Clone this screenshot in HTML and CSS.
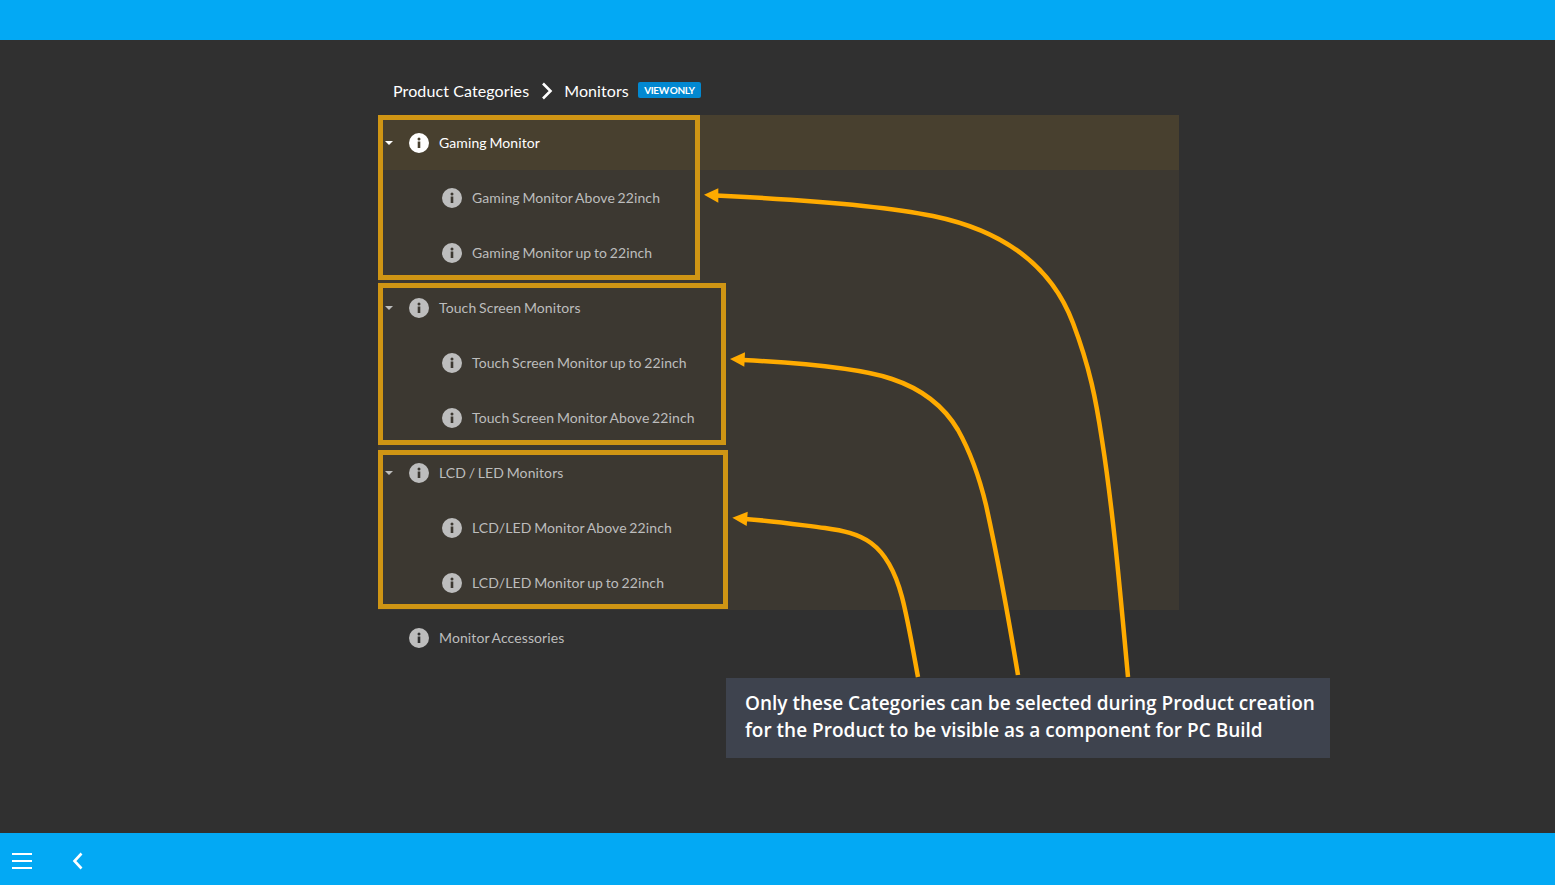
FILE: index.html
```html
<!DOCTYPE html>
<html lang="en">
<head>
  <meta charset="utf-8">
  <meta name="viewport" content="width=device-width, initial-scale=1">
  <title>Product Categories</title>
  <link rel="stylesheet" href="styles.css">
</head>
<body>
  <div class="topbar"></div>

  <div class="main">
    <div class="panel">
      <div class="breadcrumb">
        <span>Product Categories</span>
        <svg class="crumb-sep" width="14" height="18" viewBox="0 0 14 18"><path d="M3 1.5 L10.5 9 L3 16.5" fill="none" stroke="#fff" stroke-width="2.6"/></svg>
        <span>Monitors</span>
        <span class="badge">VIEW ONLY</span>
      </div>

      <div class="tree">
        <div class="tree-group">
          <div class="row row-parent row-active">
            <span class="caret"></span>
            <svg class="info"><use href="#info-icon"/></svg>
            <span>Gaming Monitor</span>
          </div>
          <div class="row row-child"><svg class="info"><use href="#info-icon"/></svg><span>Gaming Monitor Above 22inch</span></div>
          <div class="row row-child"><svg class="info"><use href="#info-icon"/></svg><span>Gaming Monitor up to 22inch</span></div>
          <div class="row row-parent"><span class="caret"></span><svg class="info"><use href="#info-icon"/></svg><span>Touch Screen Monitors</span></div>
          <div class="row row-child"><svg class="info"><use href="#info-icon"/></svg><span>Touch Screen Monitor up to 22inch</span></div>
          <div class="row row-child"><svg class="info"><use href="#info-icon"/></svg><span>Touch Screen Monitor Above 22inch</span></div>
          <div class="row row-parent"><span class="caret"></span><svg class="info"><use href="#info-icon"/></svg><span>LCD / LED Monitors</span></div>
          <div class="row row-child"><svg class="info"><use href="#info-icon"/></svg><span>LCD/LED Monitor Above 22inch</span></div>
          <div class="row row-child"><svg class="info"><use href="#info-icon"/></svg><span>LCD/LED Monitor up to 22inch</span></div>
        </div>
        <div class="row row-parent"><span class="caret caret-none"></span><svg class="info"><use href="#info-icon"/></svg><span>Monitor Accessories</span></div>
      </div>

      <!-- annotations drawn on top of the screenshot -->
      <div class="mark mark-1"></div>
      <div class="mark mark-2"></div>
      <div class="mark mark-3"></div>
      <svg class="arrows" width="1000" height="640" viewBox="378 60 1000 640">
        <g fill="none" stroke="#ffab00" stroke-width="4.5">
          <path d="M716 195.5 C790 199 880 205 933 216 C1000 230 1050 262 1073 323 C1090 368 1096 400 1102 440 C1113 510 1120 590 1128 677"/>
          <path d="M743 360 C800 363 860 368 892 379 C925 390 945 408 958 430 C972 455 980 480 986 505 C997 555 1008 615 1018 675"/>
          <path d="M745 519 C775 521 800 525 825 528 C860 533 887 540 902 597 C908 620 913 650 918 677"/>
        </g>
        <g fill="#ffab00">
          <path d="M704 194.7 L718.3 188.3 L718.3 202.7 Z"/>
          <path d="M730 359 L745 352.3 L744.3 366.7 Z"/>
          <path d="M732.3 517.7 L747.7 511.7 L746.7 526 Z"/>
        </g>
      </svg>
      <div class="callout">Only these Categories can be selected during Product creation for the Product to be visible as a component for PC Build</div>
    </div>
  </div>

  <div class="bottombar">
    <svg class="menu-icon" width="20" height="16" viewBox="0 0 20 16"><path d="M0 1 H20 M0 8 H20 M0 15 H20" stroke="#fff" stroke-width="2"/></svg>
    <svg class="back-icon" width="12" height="18" viewBox="0 0 12 18"><path d="M9.5 1.5 L2.5 9 L9.5 16.5" fill="none" stroke="#fff" stroke-width="2.6"/></svg>
  </div>

  <svg class="icon-defs" width="0" height="0">
    <symbol id="info-icon" viewBox="0 0 20 20">
      <path fill-rule="evenodd" d="M10 0 A10 10 0 1 1 10 20 A10 10 0 1 1 10 0 Z M8.7 8.5 V15 H11.3 V8.5 Z M10 4.6 A1.5 1.5 0 1 0 10 7.6 A1.5 1.5 0 1 0 10 4.6 Z"/>
    </symbol>
  </svg>
</body>
</html>
```

FILE: styles.css
```css
* {
  box-sizing: border-box;
}

html, body {
  height: 100%;
}

body {
  margin: 0;
  display: flex;
  flex-direction: column;
  overflow: hidden;
  background: #303030;
  font-family: Lato, sans-serif;
  color: #fff;
}

.topbar {
  height: 40px;
  flex-shrink: 0;
  background: #03a9f4;
}

.main {
  flex: 1;
  background: #303030;
  padding-top: 30px;
}

.panel {
  position: relative;
  width: 801px;
  margin-left: 378px;
}

.breadcrumb {
  height: 45px;
  padding: 0 0 4px 15px;
  display: flex;
  align-items: center;
  font-size: 16px;
  letter-spacing: 0.1px;
  color: #fff;
}

.crumb-sep {
  margin: 0 10px 0 11px;
}

.badge {
  margin-left: 9px;
  width: 63px;
  height: 16px;
  line-height: 16px;
  text-align: center;
  border-radius: 2px;
  background: #0288d1;
  font-size: 10px;
  font-weight: 700;
  letter-spacing: -0.4px;
  word-spacing: -1px;
  position: relative;
  top: -1px;
}

.tree-group {
  background: #3c3831;
}

.row {
  height: 55px;
  display: flex;
  align-items: center;
  font-size: 14px;
  letter-spacing: 0.1px;
  word-spacing: -1px;
  color: #bdbdbd;
}

.row-active {
  background: #48402f;
  color: #fff;
}

.row-parent {
  padding-left: 7px;
}

.row-child {
  padding-left: 64px;
}

.caret {
  width: 0;
  height: 0;
  border-left: 4px solid transparent;
  border-right: 4px solid transparent;
  border-top: 4px solid currentColor;
  margin-right: 16px;
}

.caret-none {
  border-top-color: transparent;
}

.info {
  width: 20px;
  height: 20px;
  margin-right: 10px;
  fill: currentColor;
}

.mark {
  position: absolute;
  border: 5px solid #cf9514;
}

.mark-1 {
  left: 0;
  top: 45px;
  width: 322px;
  height: 165px;
}

.mark-2 {
  left: 0;
  top: 213px;
  width: 348px;
  height: 162px;
}

.mark-3 {
  left: 0;
  top: 380px;
  width: 350px;
  height: 159px;
}

.arrows {
  position: absolute;
  left: 0;
  top: -10px;
  pointer-events: none;
}

.callout {
  position: absolute;
  left: 348px;
  top: 608px;
  width: 604px;
  height: 80px;
  padding: 12px 10px 0 19px;
  background: #3e434e;
  font-family: "Open Sans", sans-serif;
  font-size: 19px;
  font-weight: 600;
  line-height: 27px;
}

.bottombar {
  height: 52px;
  flex-shrink: 0;
  background: #03a9f4;
  display: flex;
  align-items: center;
  padding: 4px 0 0 12px;
}

.back-icon {
  margin-left: 40px;
}

.icon-defs {
  position: absolute;
}
```
